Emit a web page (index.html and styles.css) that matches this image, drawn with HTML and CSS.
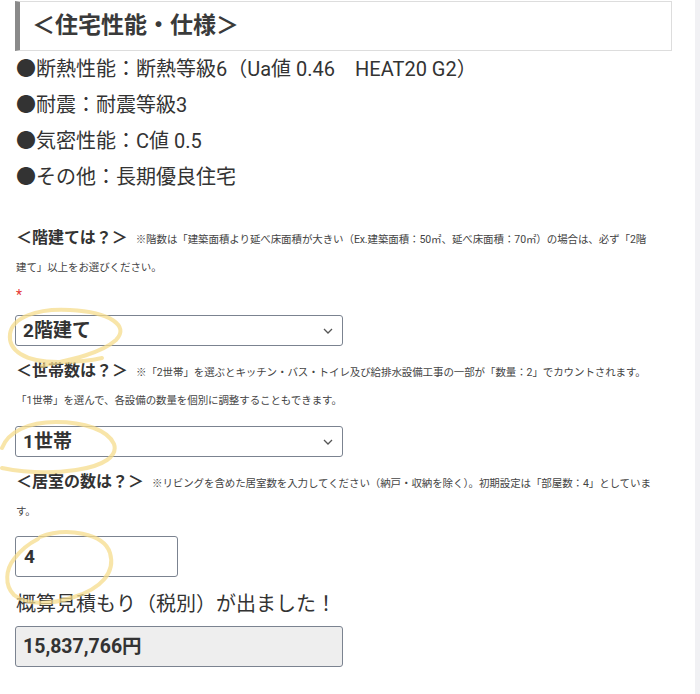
FILE: index.html
```html
<!DOCTYPE html>
<html lang="ja">
<head>
    <meta charset="UTF-8">
    <meta name="viewport" content="width=device-width, initial-scale=1.0">
    <title>住宅性能・仕様</title>
    <link rel="stylesheet" href="styles.css">
</head>
<body>
<div class="page">
    <main class="content">
        <h3 class="spec-title">＜住宅性能・仕様＞</h3>
        <ul class="spec-list">
            <li>●断熱性能：断熱等級6（Ua値 0.46　HEAT20 G2）</li>
            <li>●耐震：耐震等級3</li>
            <li>●気密性能：C値 0.5</li>
            <li>●その他：長期優良住宅</li>
        </ul>

        <div class="field field-first">
            <p class="field-label"><strong>＜階建ては？＞</strong><small>※階数は「建築面積より延べ床面積が大きい（Ex.建築面積：50㎡、延べ床面積：70㎡）の場合は、必ず「2階<br>建て」以上をお選びください。</small></p>
            <span class="required">*</span>
            <div class="control select-wrap">
                <select class="select-box">
                    <option>2階建て</option>
                    <option>1階建て</option>
                    <option>3階建て</option>
                </select>
                <svg class="chevron" width="10" height="6" viewBox="0 0 10 6"><path d="M1 1l4 4 4-4" fill="none" stroke="#555" stroke-width="1.3"/></svg>
                <!-- 手書きの丸印 -->
                <svg class="marker marker-1" width="140" height="70" viewBox="0 0 140 70"><path d="M44 62 C60 58 100 52 118 36 C132 22 112 8 72 6 C38 4 14 14 12 30 C10 46 26 58 60 58 C80 58 96 56 104 54" fill="none" stroke="#f6dc8c" stroke-opacity="0.75" stroke-width="4" stroke-linecap="round"/></svg>
            </div>
        </div>

        <div class="field">
            <p class="field-label"><strong>＜世帯数は？＞</strong><small>※「2世帯」を選ぶとキッチン・バス・トイレ及び給排水設備工事の一部が「数量：2」でカウントされます。<br>「1世帯」を選んで、各設備の数量を個別に調整することもできます。</small></p>
            <div class="control select-wrap">
                <select class="select-box">
                    <option>1世帯</option>
                    <option>2世帯</option>
                </select>
                <svg class="chevron" width="10" height="6" viewBox="0 0 10 6"><path d="M1 1l4 4 4-4" fill="none" stroke="#555" stroke-width="1.3"/></svg>
                <svg class="marker marker-2" width="140" height="80" viewBox="0 0 140 80"><path d="M2 34 C8 18 28 8 56 8 C84 8 108 16 114 30 C118 42 104 52 76 56 C50 60 22 58 2 54" fill="none" stroke="#f6dc8c" stroke-opacity="0.75" stroke-width="4" stroke-linecap="round"/></svg>
            </div>
        </div>

        <div class="field">
            <p class="field-label"><strong>＜居室の数は？＞</strong><small>※リビングを含めた居室数を入力してください（納戸・収納を除く）。初期設定は「部屋数：4」としていま<br>す。</small></p>
            <div class="control control-input">
                <input class="number-box" type="text" value="4">
                <svg class="marker marker-3" width="140" height="90" viewBox="0 0 140 90"><path d="M40 12 C66 2 104 8 110 28 C116 48 100 64 74 72 C50 80 26 80 14 70 C4 60 6 44 14 34 C20 26 30 18 38 14" fill="none" stroke="#f6dc8c" stroke-opacity="0.75" stroke-width="4" stroke-linecap="round"/></svg>
            </div>
        </div>

        <p class="result-title">概算見積もり（税別）が出ました！</p>
        <div class="result-box">15,837,766円</div>
    </main>
    <div class="scroll-track"></div>
</div>
</body>
</html>
```

FILE: styles.css
```css
:root {
    --text-color: #333333;
    --border-color: #7b8390;
    --marker-color: #f6dc8c;
}

* {
    margin: 0;
    padding: 0;
    box-sizing: border-box;
}

body {
    font-family: Roboto, "Noto Sans CJK JP", sans-serif;
    color: var(--text-color);
    background: #ffffff;
}

.page {
    display: grid;
    grid-template-columns: 1fr 5px;
    min-height: 694px;
}

.content {
    padding: 1px 23px 0 15px;
    overflow: hidden;
}

.scroll-track {
    background: #f1f1f4;
}

.spec-title {
    border: 1px solid #dddddd;
    border-left: 5px solid #8a8a8a;
    height: 50px;
    padding: 0 0 0 12px;
    font-size: 23px;
    font-weight: 700;
    line-height: 48px;
    color: #3a3a3a;
}

.spec-list {
    list-style: none;
    font-size: 20px;
    line-height: 36px;
    padding-left: 1px;
}

.field {
    margin-top: 11px;
}

.field-first {
    margin-top: 29px;
}

.field-label {
    font-size: 16px;
    line-height: 28px;
    padding-left: 1px;
    white-space: nowrap;
}

.field-label strong {
    font-size: 16px;
    font-weight: 700;
    line-height: 1;
    margin-right: 8px;
}

.field-label small {
    font-size: 10.5px;
    line-height: 1;
    letter-spacing: -0.1px;
    color: #444444;
}

.required {
    display: block;
    color: #e53935;
    font-size: 14px;
    line-height: 24px;
    margin-top: 3px;
    padding-left: 1px;
}

.control {
    position: relative;
    margin-top: 13px;
}

.field-first .control {
    margin-top: 8px;
}

.control-input {
    margin-top: 12px;
}

.select-wrap {
    width: 328px;
}

.select-box {
    appearance: none;
    -webkit-appearance: none;
    width: 328px;
    height: 31px;
    padding: 0 7px;
    border: 1px solid var(--border-color);
    border-radius: 3px;
    background: #ffffff;
    font-family: Roboto, "Noto Sans CJK JP", sans-serif;
    font-size: 19px;
    font-weight: 700;
    color: var(--text-color);
}

.chevron {
    position: absolute;
    right: 10px;
    top: 13px;
}

.number-box {
    display: block;
    width: 163px;
    height: 41px;
    padding: 0 8px;
    border: 1px solid var(--border-color);
    border-radius: 3px;
    font-family: Roboto, "Noto Sans CJK JP", sans-serif;
    font-size: 19px;
    font-weight: 700;
    color: var(--text-color);
}

.marker {
    position: absolute;
    pointer-events: none;
}

.marker-1 {
    left: -17px;
    top: -11px;
}

.marker-2 {
    left: -15px;
    top: -12px;
}

.marker-3 {
    left: -15px;
    top: -11px;
}

.result-title {
    margin-top: 11px;
    font-size: 20px;
    line-height: 32px;
    padding-left: 1px;
}

.result-box {
    margin-top: 6px;
    width: 328px;
    height: 41px;
    padding: 0 7px;
    border: 1px solid var(--border-color);
    border-radius: 3px;
    background: #eeeeee;
    font-size: 19.5px;
    font-weight: 700;
    line-height: 39px;
}
```
